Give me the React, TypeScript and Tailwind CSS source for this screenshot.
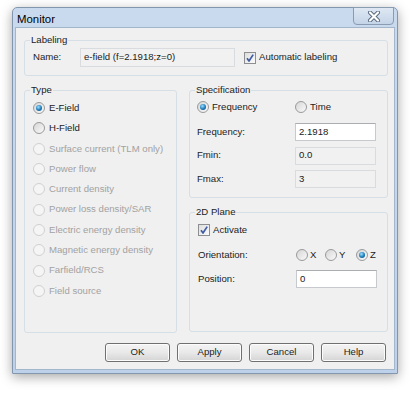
import clsx from "clsx";

type RadioProps = { checked?: boolean; disabled?: boolean };

const Radio = ({ checked, disabled }: RadioProps) => (
  <span
    className={clsx(
      "w-[12px] h-[12px] rounded-full border flex items-center justify-center shrink-0",
      disabled
        ? "border-[#d0d0d0] bg-[#f5f5f5]"
        : "border-[#989a9c] bg-linear-to-br from-[#d6d6d6] to-[#fafafa]"
    )}
  >
    {checked && (
      <span className="w-[6px] h-[6px] rounded-full bg-[radial-gradient(circle_at_40%_35%,#9fe0ff,#1c7ab8_55%,#0a4675)]" />
    )}
  </span>
);

const Checkbox = () => (
  <span className="w-[12px] h-[12px] border border-[#8c8e90] bg-linear-to-br from-[#dedede] to-[#fbfbfb] flex items-center justify-center shrink-0">
    <svg width="10" height="10" viewBox="0 0 10 10">
      <path
        d="M2 5.2 L4 8 L8.2 1.6"
        fill="none"
        stroke="#3f5ca4"
        strokeWidth="1.7"
        strokeLinejoin="round"
      />
    </svg>
  </span>
);

type GroupProps = {
  label: string;
  className?: string;
  children: React.ReactNode;
};

const Group = ({ label, className, children }: GroupProps) => (
  <div className={clsx("relative border border-[#d5dfe5] rounded-[3px]", className)}>
    <span className="absolute -top-[8px] left-[5px] px-[1px] bg-[#f0f0f0] leading-[14px]">
      {label}
    </span>
    {children}
  </div>
);

const TextBox = ({
  value,
  disabled,
  className,
}: {
  value: string;
  disabled?: boolean;
  className?: string;
}) => (
  <div
    className={clsx(
      "h-[18px] flex items-center pl-[3px] border",
      disabled
        ? "bg-[#f1f1f1] border-[#d9dcdf]"
        : "bg-white border-[#c6c9cd] border-t-[#abadb3]",
      className
    )}
  >
    {value}
  </div>
);

const Button = ({ label }: { label: string }) => (
  <div className="w-[65px] h-[19px] rounded-[3px] border border-[#707070] bg-linear-to-b from-[#f4f4f4] via-[#e9e9e9] to-[#d4d4d4] shadow-[inset_0_0_0_1px_#fcfcfc] flex items-center justify-center">
    {label}
  </div>
);

const typeOptions = [
  { label: "E-Field", checked: true },
  { label: "H-Field" },
  { label: "Surface current (TLM only)", disabled: true },
  { label: "Power flow", disabled: true },
  { label: "Current density", disabled: true },
  { label: "Power loss density/SAR", disabled: true },
  { label: "Electric energy density", disabled: true },
  { label: "Magnetic energy density", disabled: true },
  { label: "Farfield/RCS", disabled: true },
  { label: "Field source", disabled: true },
];

export default function App() {
  return (
    <div className="w-[410px] h-[393px] bg-white pt-[7px] pl-[12px] font-['Liberation_Sans',Arial,sans-serif] text-[9.6px] text-[#222]">
      <div className="w-[386px] h-[367px] flex flex-col border border-[#8296ae] rounded-t-[5px] bg-linear-to-b from-[#c9daee] to-[#bdd2ea] shadow-[0_3px_12px_rgba(0,0,0,0.35)]">
        {/* title bar */}
        <div className="h-[19px] flex justify-between items-start">
          <span className="text-[11.4px] text-black pl-[4px] leading-[22px]">Monitor</span>
          <div className="w-[41px] h-[18px] mr-[3px] -mt-px rounded-b-[4px] border border-[#8a9cb2] bg-linear-to-b from-[#dfe8f3] to-[#c4d4e8] flex items-center justify-center">
            <svg width="14" height="11" viewBox="0 0 14 11">
              <path d="M3 1.5 L11 9.5 M11 1.5 L3 9.5" stroke="#55677d" strokeWidth="4" strokeLinecap="round" />
              <path d="M3 1.5 L11 9.5 M11 1.5 L3 9.5" stroke="#ffffff" strokeWidth="2.2" strokeLinecap="round" />
            </svg>
          </div>
        </div>

        {/* client area */}
        <div className="flex-1 mx-[2px] mb-[3px] border border-[#a3b6cc] bg-[#f0f0f0] flex flex-col">
          <Group label="Labeling" className="ml-[8px] mt-[12px] w-[364px]">
            <div className="flex items-center pl-[8px] pt-[7px] pb-[8px]">
              <span className="w-[47px]">Name:</span>
              <TextBox value="e-field (f=2.1918;z=0)" disabled className="w-[155px] h-[19px]" />
              <span className="ml-[9px]">
                <Checkbox />
              </span>
              <span className="ml-[3px]">Automatic labeling</span>
            </div>
          </Group>

          <div className="flex ml-[8px] mt-[14px] gap-[12px]">
            <Group label="Type" className="w-[153px] h-[243px]">
              <div className="flex flex-col pl-[8px] pt-[7px]">
                {typeOptions.map((o) => (
                  <div
                    key={o.label}
                    className={clsx(
                      "h-[20.3px] flex items-center gap-[4px]",
                      o.disabled && "text-[#a2a2a2]"
                    )}
                  >
                    <Radio checked={o.checked} disabled={o.disabled} />
                    <span>{o.label}</span>
                  </div>
                ))}
              </div>
            </Group>

            <div className="flex flex-col gap-[14px]">
              <Group label="Specification" className="w-[199px] h-[108px]">
                <div className="flex flex-col pl-[7px] pt-[6px]">
                  <div className="h-[20px] flex items-center">
                    <div className="w-[98px] flex items-center gap-[3px]">
                      <Radio checked />
                      <span>Frequency</span>
                    </div>
                    <div className="flex items-center gap-[3px]">
                      <Radio />
                      <span>Time</span>
                    </div>
                  </div>
                  <div className="flex flex-col gap-[5.5px] mt-[6px]">
                    <div className="flex items-center">
                      <span className="w-[98px]">Frequency:</span>
                      <TextBox value="2.1918" className="w-[81px]" />
                    </div>
                    <div className="flex items-center">
                      <span className="w-[98px]">Fmin:</span>
                      <TextBox value="0.0" disabled className="w-[81px]" />
                    </div>
                    <div className="flex items-center">
                      <span className="w-[98px]">Fmax:</span>
                      <TextBox value="3" disabled className="w-[81px]" />
                    </div>
                  </div>
                </div>
              </Group>

              <Group label="2D Plane" className="w-[199px] h-[120px]">
                <div className="flex flex-col pl-[8px] pt-[7px]">
                  <div className="h-[20px] flex items-center gap-[3px]">
                    <Checkbox />
                    <span>Activate</span>
                  </div>
                  <div className="h-[20px] mt-[5px] flex items-center">
                    <span className="w-[98px]">Orientation:</span>
                    <div className="w-[29px] flex items-center gap-[2px]">
                      <Radio />
                      <span>X</span>
                    </div>
                    <div className="w-[31px] flex items-center gap-[2px]">
                      <Radio />
                      <span>Y</span>
                    </div>
                    <div className="flex items-center gap-[2px]">
                      <Radio checked />
                      <span>Z</span>
                    </div>
                  </div>
                  <div className="flex items-center mt-[5px]">
                    <span className="w-[98px]">Position:</span>
                    <TextBox value="0" className="w-[81px]" />
                  </div>
                </div>
              </Group>
            </div>
          </div>

          <div className="flex justify-end gap-[7px] pr-[8px] mt-[10px]">
            <Button label="OK" />
            <Button label="Apply" />
            <Button label="Cancel" />
            <Button label="Help" />
          </div>
        </div>
      </div>
    </div>
  );
}
